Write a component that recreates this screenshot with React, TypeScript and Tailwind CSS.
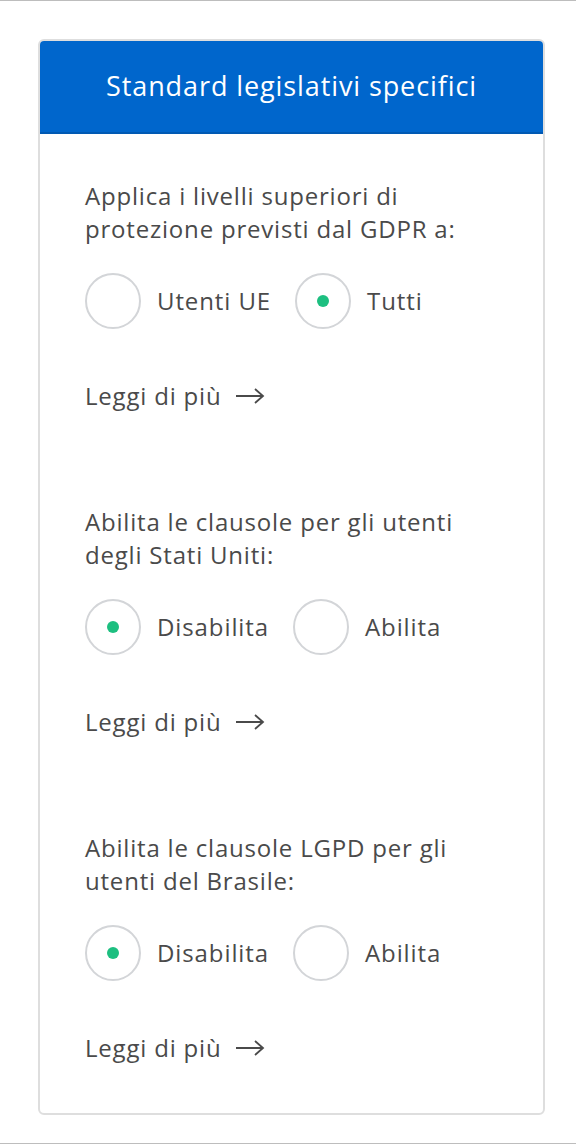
import { useState } from 'react';

type Option = { value: string; label: string };

type Setting = {
  id: string;
  question: string[];
  options: Option[];
  initial: string;
};

const settings: Setting[] = [
  {
    id: 'gdpr',
    question: ['Applica i livelli superiori di', 'protezione previsti dal GDPR a:'],
    options: [
      { value: 'eu', label: 'Utenti UE' },
      { value: 'all', label: 'Tutti' },
    ],
    initial: 'all',
  },
  {
    id: 'us',
    question: ['Abilita le clausole per gli utenti', 'degli Stati Uniti:'],
    options: [
      { value: 'off', label: 'Disabilita' },
      { value: 'on', label: 'Abilita' },
    ],
    initial: 'off',
  },
  {
    id: 'lgpd',
    question: ['Abilita le clausole LGPD per gli', 'utenti del Brasile:'],
    options: [
      { value: 'off', label: 'Disabilita' },
      { value: 'on', label: 'Abilita' },
    ],
    initial: 'off',
  },
];

const Radio = ({ checked, label, onClick }: { checked: boolean; label: string; onClick: () => void }) => (
  <button type="button" onClick={onClick} className="flex items-center gap-[16px] cursor-pointer">
    <span className="w-14 h-14 rounded-full border-2 border-[#d3d5d8] flex items-center justify-center">
      {checked && <span className="w-3 h-3 rounded-full bg-[#1dbf80]" />}
    </span>
    <span className="text-[24px] tracking-[0.9px] text-[#4a4a4a]">{label}</span>
  </button>
);

const SettingBlock = ({ setting }: { setting: Setting }) => {
  const [value, setValue] = useState(setting.initial);

  return (
    <div className="flex flex-col">
      <p className="text-[24px] leading-[33px] tracking-[0.8px] font-medium text-[#4a4a4a] whitespace-nowrap">
        {setting.question.map((line) => (
          <span key={line} className="block">
            {line}
          </span>
        ))}
      </p>
      <div className="flex items-center gap-6 mt-[28px]">
        {setting.options.map((o) => (
          <Radio key={o.value} checked={value === o.value} label={o.label} onClick={() => setValue(o.value)} />
        ))}
      </div>
      <a href="#" className="mt-[50px] flex items-center gap-[14px] text-[24px] tracking-[0.8px] text-[#4a4a4a] leading-[33px]">
        Leggi di più
        <svg width="30" height="18" viewBox="0 0 30 18" fill="none" stroke="#4a4a4a" strokeWidth="1.8">
          <path d="M1 9h27M20 2l8 7-8 7" />
        </svg>
      </a>
    </div>
  );
};

const App = () => {
  return (
    <div className="w-[576px] min-h-[1144px] bg-white border-y border-[#bdbdbd] font-['Open_Sans',sans-serif] pt-[38px]">
      <div className="mx-[38px] w-[507px] rounded-[6px] border-2 border-[#dedede] overflow-hidden">
        <div className="bg-[#0066cc] border-b-2 border-[#0059b3] h-[93px] flex items-center justify-center">
          <h2 className="text-[27px] tracking-[0.9px] text-white">Standard legislativi specifici</h2>
        </div>
        <div className="px-[45px] pt-[45px] pb-[49px] flex flex-col gap-[93px]">
          {settings.map((s) => (
            <SettingBlock key={s.id} setting={s} />
          ))}
        </div>
      </div>
    </div>
  );
};

export default App;
